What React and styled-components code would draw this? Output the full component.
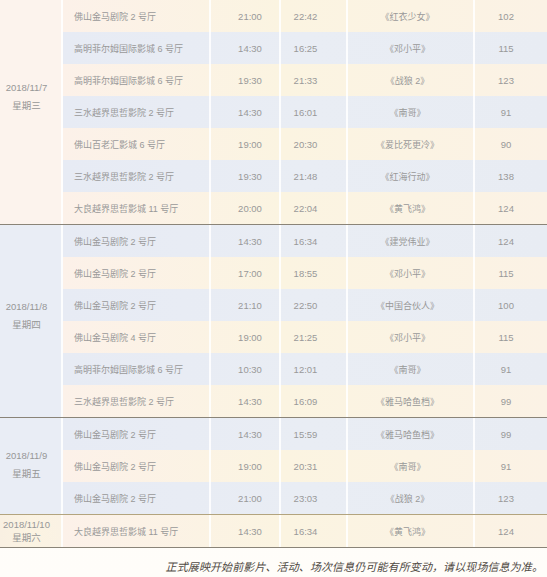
import styled, { createGlobalStyle } from 'styled-components'

const GlobalStyle = createGlobalStyle`
  html, body {
    margin: 0;
    padding: 0;
    background: #fff;
  }
  body {
    font-family: "Liberation Sans", "Noto Sans CJK SC", sans-serif;
  }
`

const sections = [
  {
    date: '2018/11/7',
    week: '星期三',
    tone: 'peach',
    shift: 30,
    line: '#8a8478',
    rows: [
      ['佛山金马剧院 2 号厅', '21:00', '22:42', '《红衣少女》', '102'],
      ['高明菲尔姆国际影城 6 号厅', '14:30', '16:25', '《邓小平》', '115'],
      ['高明菲尔姆国际影城 6 号厅', '19:30', '21:33', '《战狼 2》', '123'],
      ['三水越界思哲影院 2 号厅', '14:30', '16:01', '《南哥》', '91'],
      ['佛山百老汇影城 6 号厅', '19:00', '20:30', '《爱比死更冷》', '90'],
      ['三水越界思哲影院 2 号厅', '19:30', '21:48', '《红海行动》', '138'],
      ['大良越界思哲影城 11 号厅', '20:00', '22:04', '《黄飞鸿》', '124'],
    ],
  },
  {
    date: '2018/11/8',
    week: '星期四',
    tone: 'blue',
    shift: 10,
    line: '#8a8478',
    rows: [
      ['佛山金马剧院 2 号厅', '14:30', '16:34', '《建党伟业》', '124'],
      ['佛山金马剧院 2 号厅', '17:00', '18:55', '《邓小平》', '115'],
      ['佛山金马剧院 2 号厅', '21:10', '22:50', '《中国合伙人》', '100'],
      ['佛山金马剧院 4 号厅', '19:00', '21:25', '《邓小平》', '115'],
      ['高明菲尔姆国际影城 6 号厅', '10:30', '12:01', '《南哥》', '91'],
      ['三水越界思哲影院 2 号厅', '14:30', '16:09', '《雅马哈鱼档》', '99'],
    ],
  },
  {
    date: '2018/11/9',
    week: '星期五',
    tone: 'blue',
    shift: 2,
    line: '#b3a47e',
    rows: [
      ['佛山金马剧院 2 号厅', '14:30', '15:59', '《雅马哈鱼档》', '99'],
      ['佛山金马剧院 2 号厅', '19:00', '20:31', '《南哥》', '91'],
      ['佛山金马剧院 2 号厅', '21:00', '23:03', '《战狼 2》', '123'],
    ],
  },
  {
    date: '2018/11/10',
    week: '星期六',
    tone: 'cream',
    shift: 0,
    line: '#8a8478',
    tight: true,
    rows: [['大良越界思哲影城 11 号厅', '14:30', '16:34', '《黄飞鸿》', '124']],
  },
]

const tones = {
  peach: '#fcf3ed',
  cream: 'linear-gradient(90deg, #f9f0e2 0%, #fbf3e2 50%, #faf2e4 100%)',
  blue: '#e9edf5',
}

const rowTones = {
  cream: 'linear-gradient(90deg, #fcf1e9 0%, #fbf4e1 45%, #fbf2e5 100%)',
  blue: 'linear-gradient(90deg, #e7ebf4 0%, #e9edf4 50%, #e8ecf3 100%)',
}

const Page = styled.div`
  width: 547px;
  height: 577px;
  overflow: hidden;
  background: linear-gradient(180deg, #fff 0%, #fffdf9 100%);
`

const Table = styled.div`
  display: flex;
  flex-direction: column;
  color: #999;
  font-size: 9px;
`

const Section = styled.div`
  display: flex;
  border-bottom: 1px solid ${p => p.$line};
`

const DateCell = styled.div`
  box-sizing: border-box;
  width: 63px;
  flex: none;
  display: flex;
  flex-direction: column;
  align-items: center;
  justify-content: center;
  padding-right: 8px;
  padding-bottom: ${p => p.$shift}px;
  background: ${p => tones[p.$tone]};
  border-right: 2px solid rgba(255, 255, 255, 0.85);
  font-size: 9.5px;
  line-height: ${p => (p.$tight ? '13px' : '18px')};
  color: #979797;
`

const Rows = styled.div`
  flex: 1;
  display: flex;
  flex-direction: column;
`

const Row = styled.div`
  display: grid;
  grid-template-columns: 148px 70px 67px 127px 1fr;
  height: 32px;
  background: ${p => rowTones[p.$tone]};
`

const Cell = styled.div`
  box-sizing: border-box;
  display: flex;
  align-items: center;
  justify-content: ${p => p.$align || 'center'};
  padding: 0 ${p => p.$pr || 0}px 0 ${p => p.$pl || 0}px;
  border-right: ${p => (p.$last ? 'none' : '2px solid rgba(255, 255, 255, 0.85)')};
  font-size: ${p => (p.$num ? '9.5px' : '9px')};
  white-space: nowrap;
`

const Note = styled.div`
  text-align: right;
  padding: 10px 4px 0 0;
  font-family: "Noto Sans CJK SC", sans-serif;
  font-style: italic;
  font-size: 11px;
  letter-spacing: 0.1px;
  color: #4f4a44;
`

export default function App() {
  let index = 0
  return (
    <Page>
      <GlobalStyle />
      <Table>
        {sections.map(section => (
          <Section key={section.date} $line={section.line}>
            <DateCell $tone={section.tone} $shift={section.shift} $tight={section.tight}>
              <span>{section.date}</span>
              <span>{section.week}</span>
            </DateCell>
            <Rows>
              {section.rows.map((row, i) => {
                const tone = section.date === '2018/11/10'
                  ? 'cream'
                  : (index++ % 2 === 0 ? 'cream' : 'blue')
                return (
                  <Row key={i} $tone={tone}>
                    <Cell $align="flex-start" $pl={11}>{row[0]}</Cell>
                    <Cell $num $pl={10}>{row[1]}</Cell>
                    <Cell $num $pr={16}>{row[2]}</Cell>
                    <Cell $pr={6}>{row[3]}</Cell>
                    <Cell $num $last $pr={10}>{row[4]}</Cell>
                  </Row>
                )
              })}
            </Rows>
          </Section>
        ))}
      </Table>
      <Note>正式展映开始前影片、活动、场次信息仍可能有所变动，请以现场信息为准。</Note>
    </Page>
  )
}
